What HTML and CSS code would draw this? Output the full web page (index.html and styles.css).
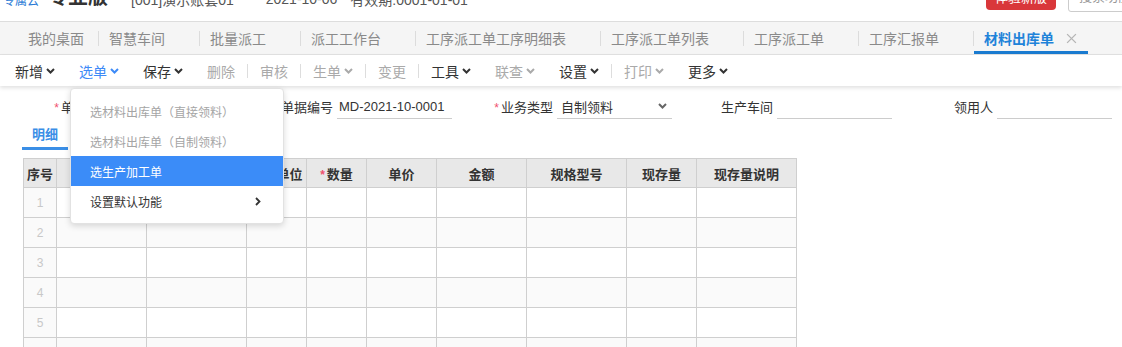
FILE: index.html
```html
<!DOCTYPE html>
<html lang="zh-CN">
<head>
    <meta charset="UTF-8">
    <meta name="viewport" content="width=device-width, initial-scale=1.0">
    <title>材料出库单</title>
    <link rel="stylesheet" href="styles.css">
</head>
<body>
    <!-- top bar (scrolled, only bottom visible) -->
    <div class="topbar">
        <div class="topbar-inner">
            <span class="brand-cloud">专属云</span>
            <span class="brand-name">专业版</span>
            <span class="account">[001]演示账套01</span>
            <span class="date">2021-10-06</span>
            <span class="expire">有效期:0001-01-01</span>
            <button class="btn-new">体验新版</button>
            <div class="search">搜索功能</div>
        </div>
    </div>

    <!-- page tabs -->
    <div class="tabs">
        <span class="tab first">我的桌面</span>
        <span class="tab-sep"></span>
        <span class="tab">智慧车间<svg class="close" viewBox="0 0 10 10"><path d="M1 1L9 9M9 1L1 9"/></svg></span>
        <span class="tab-sep"></span>
        <span class="tab">批量派工<svg class="close" viewBox="0 0 10 10"><path d="M1 1L9 9M9 1L1 9"/></svg></span>
        <span class="tab-sep"></span>
        <span class="tab">派工工作台<svg class="close" viewBox="0 0 10 10"><path d="M1 1L9 9M9 1L1 9"/></svg></span>
        <span class="tab-sep"></span>
        <span class="tab">工序派工单工序明细表<svg class="close" viewBox="0 0 10 10"><path d="M1 1L9 9M9 1L1 9"/></svg></span>
        <span class="tab-sep"></span>
        <span class="tab">工序派工单列表<svg class="close" viewBox="0 0 10 10"><path d="M1 1L9 9M9 1L1 9"/></svg></span>
        <span class="tab-sep"></span>
        <span class="tab">工序派工单<svg class="close" viewBox="0 0 10 10"><path d="M1 1L9 9M9 1L1 9"/></svg></span>
        <span class="tab-sep"></span>
        <span class="tab">工序汇报单<svg class="close" viewBox="0 0 10 10"><path d="M1 1L9 9M9 1L1 9"/></svg></span>
        <span class="tab-sep"></span>
        <span class="tab active">材料出库单<svg class="close" viewBox="0 0 10 10"><path d="M1 1L9 9M9 1L1 9"/></svg></span>
    </div>

    <!-- toolbar -->
    <div class="toolbar">
        <div class="tool">新增<svg class="chev" viewBox="0 0 9 6"><path d="M1 1L4.5 4.5L8 1"/></svg></div>
        <div class="tool open">选单<svg class="chev" viewBox="0 0 9 6"><path d="M1 1L4.5 4.5L8 1"/></svg>
            <div class="menu">
                <div class="menu-item off">选材料出库单（直接领料）</div>
                <div class="menu-item off">选材料出库单（自制领料）</div>
                <div class="menu-item hover">选生产加工单</div>
                <div class="menu-item">设置默认功能<svg class="arrow" viewBox="0 0 6 9"><path d="M1 1L4.5 4.5L1 8"/></svg></div>
            </div>
        </div>
        <div class="tool">保存<svg class="chev" viewBox="0 0 9 6"><path d="M1 1L4.5 4.5L8 1"/></svg></div>
        <div class="tool off">删除</div>
        <span class="tool-sep"></span>
        <div class="tool off">审核</div>
        <span class="tool-sep"></span>
        <div class="tool off">生单<svg class="chev" viewBox="0 0 9 6"><path d="M1 1L4.5 4.5L8 1"/></svg></div>
        <span class="tool-sep"></span>
        <div class="tool off">变更</div>
        <span class="tool-sep"></span>
        <div class="tool">工具<svg class="chev" viewBox="0 0 9 6"><path d="M1 1L4.5 4.5L8 1"/></svg></div>
        <div class="tool off">联查<svg class="chev" viewBox="0 0 9 6"><path d="M1 1L4.5 4.5L8 1"/></svg></div>
        <div class="tool">设置<svg class="chev" viewBox="0 0 9 6"><path d="M1 1L4.5 4.5L8 1"/></svg></div>
        <span class="tool-sep"></span>
        <div class="tool off">打印<svg class="chev" viewBox="0 0 9 6"><path d="M1 1L4.5 4.5L8 1"/></svg></div>
        <div class="tool">更多<svg class="chev" viewBox="0 0 9 6"><path d="M1 1L4.5 4.5L8 1"/></svg></div>
    </div>

    <!-- bill head -->
    <div class="form-row">
        <div class="field"><label><em>*</em>单据日期</label><div class="input">2021-10-06</div></div>
        <div class="field"><label>单据编号</label><div class="input">MD-2021-10-0001</div></div>
        <div class="field"><label><em>*</em>业务类型</label><div class="input select">自制领料<svg class="chev" viewBox="0 0 9 6"><path d="M1 1L4.5 4.5L8 1"/></svg></div></div>
        <div class="field"><label>生产车间</label><div class="input"></div></div>
        <div class="field"><label>领用人</label><div class="input"></div></div>
    </div>

    <div class="detail-tabs">
        <span class="detail-tab">明细</span>
    </div>

    <table class="grid">
        <colgroup>
            <col style="width:33px"><col style="width:90px"><col style="width:100px"><col style="width:60px"><col style="width:60px">
            <col style="width:70px"><col style="width:90px"><col style="width:100px"><col style="width:70px"><col style="width:100px">
        </colgroup>
        <thead>
            <tr>
                <th>序号</th><th>物料编码</th><th>物料名称</th><th>计量单位</th><th><em>*</em>数量</th>
                <th>单价</th><th>金额</th><th>规格型号</th><th>现存量</th><th>现存量说明</th>
            </tr>
        </thead>
        <tbody>
            <tr><td class="no">1</td><td></td><td></td><td></td><td></td><td></td><td></td><td></td><td></td><td></td></tr>
            <tr><td class="no">2</td><td></td><td></td><td></td><td></td><td></td><td></td><td></td><td></td><td></td></tr>
            <tr><td class="no">3</td><td></td><td></td><td></td><td></td><td></td><td></td><td></td><td></td><td></td></tr>
            <tr><td class="no">4</td><td></td><td></td><td></td><td></td><td></td><td></td><td></td><td></td><td></td></tr>
            <tr><td class="no">5</td><td></td><td></td><td></td><td></td><td></td><td></td><td></td><td></td><td></td></tr>
            <tr><td class="no">6</td><td></td><td></td><td></td><td></td><td></td><td></td><td></td><td></td><td></td></tr>
        </tbody>
    </table>
</body>
</html>
```

FILE: styles.css
```css
* { box-sizing: border-box; }
body {
    margin: 0;
    font-family: "Liberation Sans", "Noto Sans CJK SC", sans-serif;
    font-size: 13px;
    color: #333;
    background: #fff;
    overflow: hidden;
}

/* top bar */
.topbar { height: 21px; overflow: hidden; }
.topbar-inner { display: flex; align-items: center; height: 30px; margin-top: -16px; }
.brand-cloud { font-size: 12px; color: #2b7bd6; margin: 0 9px 0 3px; }
.brand-name { font-size: 20px; font-weight: bold; color: #333; margin: -8px 23px 0 0; }
.account, .date, .expire { font-size: 14px; color: #555; white-space: nowrap; }
.account { margin-right: 32px; }
.date { margin-right: 13px; }
.btn-new {
    margin-left: auto;
    align-self: flex-start;
    margin-top: -2px;
    flex-shrink: 0;
    width: 70px;
    height: 28px;
    border: none;
    border-radius: 4px;
    background: #d9373a;
    color: #fff;
    font: inherit;
    font-size: 13px;
}
.search {
    align-self: flex-start;
    flex-shrink: 0;
    margin: -2px -26px 0 12px;
    width: 80px;
    height: 30px;
    border: 1px solid #ccc;
    border-radius: 3px;
    padding-left: 10px;
    line-height: 28px;
    color: #999;
}

/* page tabs */
.tabs {
    display: flex;
    height: 34px;
    padding-left: 18px;
    background: #f5f5f5;
    border-top: 1px solid #ddd;
    border-bottom: 1px solid #e2e2e2;
    font-size: 14px;
}
.tab {
    display: flex;
    align-items: center;
    padding: 3px 11px 0 10px;
    color: #8a8a8a;
    border-bottom: 3px solid transparent;
    white-space: nowrap;
}
.tab.first { padding-right: 14px; }
.tab.active { color: #1f83d9; font-weight: bold; border-bottom-color: #1a7bd0; }
.tab .close { width: 11px; height: 11px; margin-left: 12px; visibility: hidden; }
.tab .close path { stroke: #b5b5b5; stroke-width: 1.2; fill: none; }
.tab.active .close { visibility: visible; }
.tab-sep { align-self: center; width: 1px; height: 15px; background: #dcdcdc; }

/* toolbar */
.toolbar {
    position: relative;
    z-index: 2;
    display: flex;
    align-items: center;
    height: 31px;
    padding-left: 3px;
    background: #fff;
    box-shadow: 0 2px 4px rgba(0, 0, 0, 0.12);
    font-size: 14px;
}
.tool {
    position: relative;
    display: flex;
    align-items: center;
    height: 100%;
    padding: 0 12px;
    color: #333;
    white-space: nowrap;
}
.tool.off { color: #aaa; }
.tool.open { color: #3d8af7; }
.chev { width: 9px; height: 6px; margin-left: 3px; }
.chev path { stroke: currentColor; stroke-width: 2; fill: none; }
.tool-sep { width: 1px; height: 14px; background: #ddd; }

/* dropdown */
.menu {
    position: absolute;
    left: 3px;
    top: 33px;
    z-index: 10;
    width: 214px;
    padding: 7px 0;
    background: #fff;
    border: 1px solid #e2e2e2;
    border-radius: 4px;
    box-shadow: 0 2px 6px rgba(0, 0, 0, 0.15);
    font-size: 12px;
}
.menu-item {
    display: flex;
    align-items: center;
    justify-content: space-between;
    height: 30px;
    padding: 0 22px 0 19px;
    color: #333;
}
.menu-item.off { color: #a5a5a5; }
.menu-item.hover { background: #3b8cf8; color: #fff; }
.menu-item .arrow { width: 6px; height: 9px; }
.menu-item .arrow path { stroke: #333; stroke-width: 1.8; fill: none; }

/* bill head */
.form-row { display: flex; padding: 8px 0 0 12px; }
.field { display: flex; align-items: center; width: 220px; flex-shrink: 0; }
.field label { width: 105px; padding-right: 4px; text-align: right; white-space: nowrap; }
.field em, .grid em { font-style: normal; color: #f0506e; font-size: 12px; margin-right: 2px; }
.input {
    display: flex;
    align-items: center;
    width: 115px;
    height: 25px;
    padding-left: 2px;
    border-bottom: 1px solid #ccc;
    white-space: nowrap;
}
.input.select { justify-content: space-between; padding: 0 5px 0 4px; }
.input.select .chev { color: #666; }

/* detail tabs */
.detail-tabs { display: flex; margin: 3px 0 0 22px; }
.detail-tab {
    height: 28px;
    padding: 0 10px;
    line-height: 25px;
    border-bottom: 3px solid #3a8ee6;
    color: #3a8ee6;
    font-weight: bold;
}

/* grid */
.grid {
    margin: 8px 0 0 23px;
    width: 774px;
    table-layout: fixed;
    border-collapse: collapse;
}
.grid th, .grid td { border: 1px solid #cfcfcf; padding: 0; text-align: center; }
.grid th { height: 29px; background: #e8e8e8; font-weight: bold; color: #333; white-space: nowrap; }
.grid td { height: 30px; }
.grid tbody tr:nth-child(even) td { background: #fafafa; }
.grid td.no { background: #fafafa; color: #c8c8c8; font-size: 12px; }
```
